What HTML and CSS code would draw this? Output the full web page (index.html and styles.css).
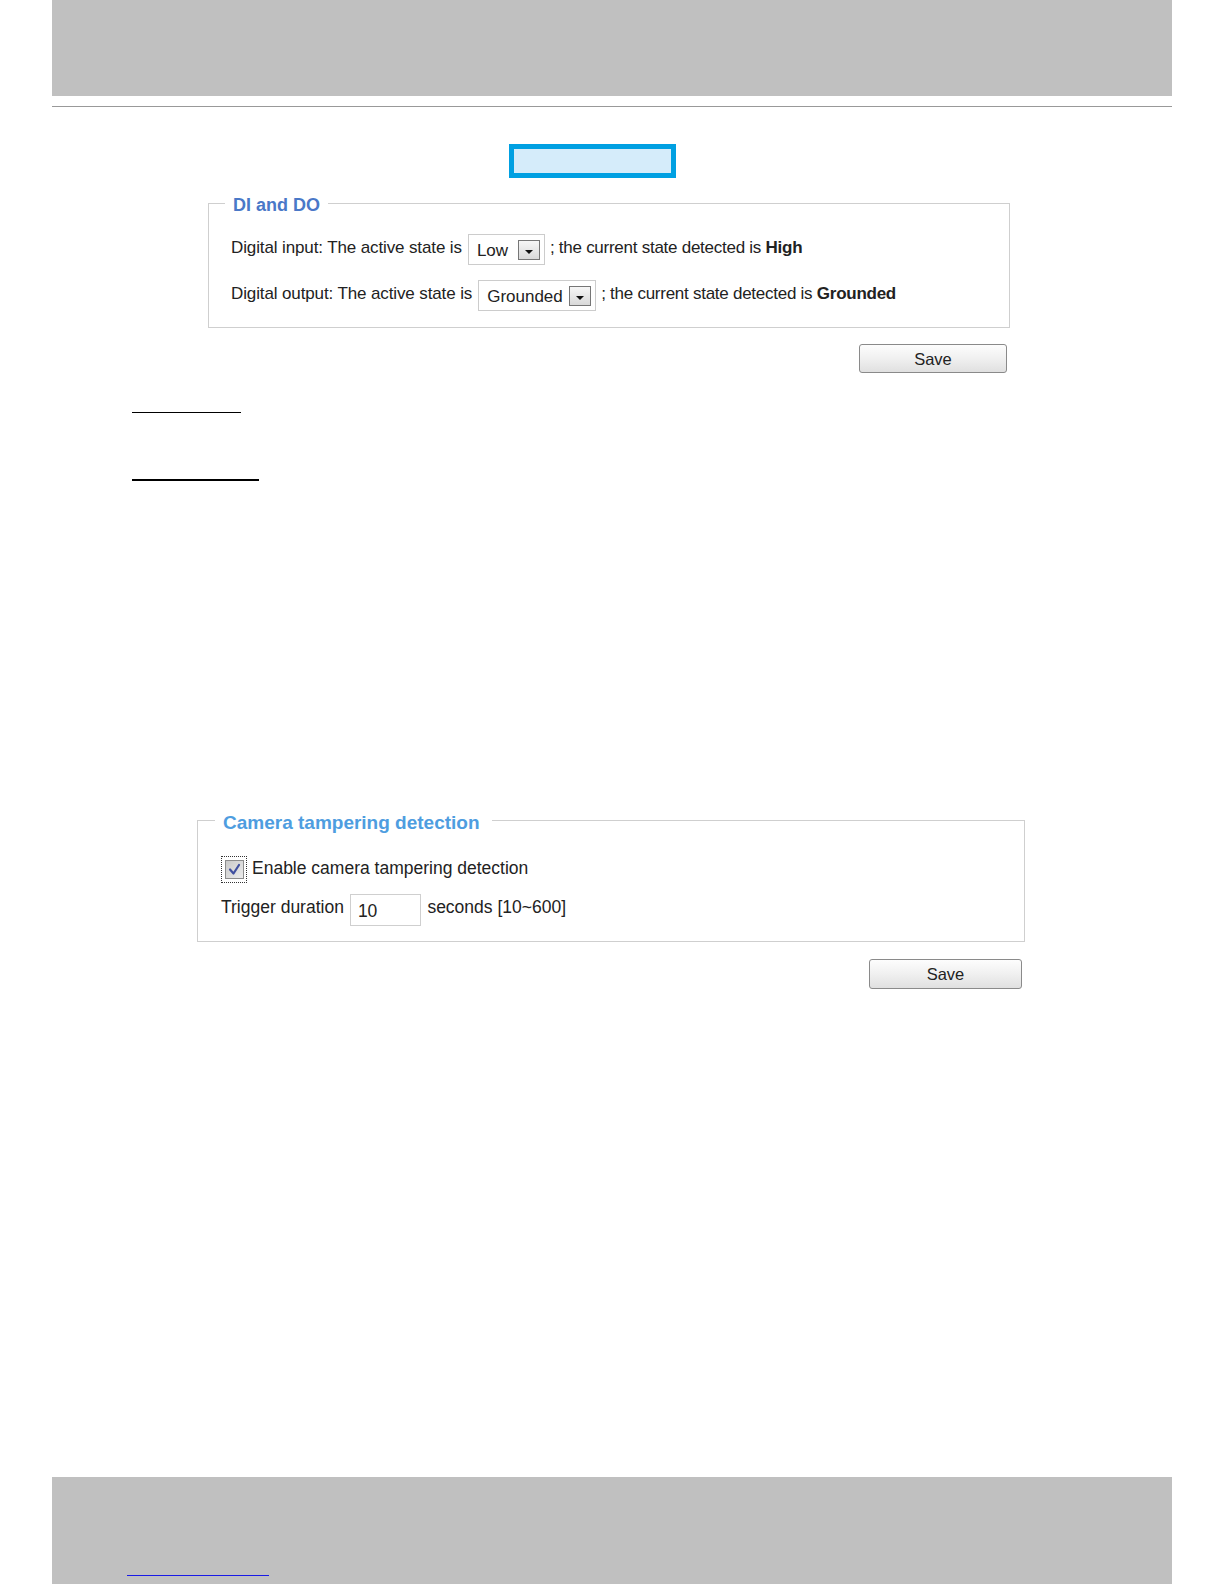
FILE: index.html
```html
<!DOCTYPE html>
<html lang="en">
<head>
<meta charset="utf-8">
<title>DI and DO / Camera tampering detection</title>
<link rel="stylesheet" href="styles.css">
</head>
<body>
<div class="page">
  <header class="top-band"></header>
  <div class="top-rule"></div>
  <div class="callout"></div>

  <fieldset class="panel panel-dio">
    <legend class="panel-title title-dio">DI and DO</legend>
    <div class="panel-body body-dio">
      <div class="row">
        <span class="lbl">Digital input: The active state is</span>
        <span class="select select-low"><span class="select-value">Low</span><span class="select-btn"><span class="caret"></span></span></span>
        <span class="lbl lbl-tail">; the current state detected is <b>High</b></span>
      </div>
      <div class="row">
        <span class="lbl">Digital output: The active state is</span>
        <span class="select select-grounded"><span class="select-value">Grounded</span><span class="select-btn"><span class="caret"></span></span></span>
        <span class="lbl lbl-tail">; the current state detected is <b>Grounded</b></span>
      </div>
    </div>
  </fieldset>
  <div class="actions actions-dio"><button class="btn-save btn-save-dio" type="button">Save</button></div>

  <div class="rule-mark rule-mark-1"></div>
  <div class="rule-mark rule-mark-2"></div>

  <fieldset class="panel panel-tamper">
    <legend class="panel-title title-tamper">Camera tampering detection</legend>
    <div class="panel-body body-tamper">
      <div class="row row-check">
        <span class="focus-ring">
          <span class="checkbox">
            <svg viewBox="0 0 17 17" width="17" height="17" aria-hidden="true"><path d="M4 8.5 L7.5 12.5 L13 4" fill="none" stroke="#4050a0" stroke-width="2.2" stroke-linecap="round" stroke-linejoin="round"/></svg>
          </span>
        </span>
        <span class="check-label">Enable camera tampering detection</span>
      </div>
      <div class="row row-trigger">
        <span class="lbl-t">Trigger duration</span>
        <input class="num-input" type="text" value="10">
        <span class="lbl-t">seconds [10~600]</span>
      </div>
    </div>
  </fieldset>
  <div class="actions actions-tamper"><button class="btn-save btn-save-tamper" type="button">Save</button></div>

  <footer class="bottom-band"><span class="footer-link"></span></footer>
</div>
</body>
</html>
```

FILE: styles.css
```css
* { box-sizing: border-box; }

html, body {
  margin: 0;
  padding: 0;
  background: #ffffff;
}

body {
  font-family: "Liberation Sans", Arial, sans-serif;
  color: #222222;
}

.page {
  width: 1224px;
  height: 1584px;
  display: flex;
  flex-direction: column;
  overflow: hidden;
}

.top-band {
  flex: none;
  height: 96px;
  margin: 0 52px;
  background: #c0c0c0;
}

.top-rule {
  flex: none;
  height: 1px;
  margin: 10px 52px 0;
  background: #999999;
}

.callout {
  flex: none;
  width: 167px;
  height: 34px;
  margin: 37px 0 0 509px;
  border: 5px solid #00a0e2;
  background: #d5ecfa;
}

/* panels */
.panel {
  flex: none;
  min-width: 0;
  padding: 0;
  border: 1px solid #cfcfcf;
}

.panel-title {
  padding: 0 8px;
  font-weight: bold;
}

.panel-dio {
  width: 802px;
  margin: 13px 0 0 208px;
}

.title-dio {
  margin-left: 16px;
  padding-top: 4px;
  font-size: 18px;
  line-height: 20px;
  color: #4a78c8;
}

.body-dio {
  display: flex;
  flex-direction: column;
  gap: 15px;
  padding: 19px 0 16px 22px;
  font-size: 17px;
  letter-spacing: -0.12px;
}

.row {
  display: flex;
  align-items: flex-start;
}

.body-dio .row {
  height: 31px;
  gap: 6px;
}

.lbl {
  margin-top: 4px;
  line-height: 20px;
  white-space: nowrap;
}

.lbl-tail {
  margin-left: -1px;
  letter-spacing: -0.26px;
}

.select {
  display: flex;
  justify-content: space-between;
  align-items: flex-start;
  height: 31px;
  padding: 0 4px 0 8px;
  border: 1px solid #cccccc;
  background: #ffffff;
  letter-spacing: 0;
}

.select-low { width: 77px; }
.select-grounded { width: 118px; }

.select-value {
  margin-top: 6px;
  line-height: 20px;
}

.select-btn {
  display: flex;
  align-items: center;
  justify-content: center;
  width: 22px;
  height: 20px;
  margin-top: 5px;
  border: 1px solid #767676;
  background: linear-gradient(#f6f6f6, #d9d9d9);
}

.caret {
  width: 0;
  height: 0;
  margin-top: 3px;
  border-left: 4px solid transparent;
  border-right: 4px solid transparent;
  border-top: 4px solid #111111;
}

/* save buttons */
.actions {
  flex: none;
  display: flex;
  justify-content: flex-end;
  padding-right: 3px;
}

.actions-dio {
  width: 802px;
  margin: 16px 0 0 208px;
}

.actions-tamper {
  width: 828px;
  margin: 17px 0 0 197px;
}

.btn-save {
  padding: 0;
  border: 1px solid #8a8a8a;
  border-radius: 3px;
  background: linear-gradient(#fdfdfd 0%, #f0f0f0 50%, #e0e0e0 100%);
  font-family: "Liberation Sans", Arial, sans-serif;
  font-size: 16.5px;
  color: #222222;
  line-height: 20px;
}

.btn-save-dio { width: 148px; height: 29px; }
.btn-save-tamper { width: 153px; height: 30px; }

/* stray underline marks */
.rule-mark {
  flex: none;
  margin-left: 132px;
  background: #000000;
}

.rule-mark-1 {
  width: 109px;
  height: 1px;
  margin-top: 39px;
}

.rule-mark-2 {
  width: 127px;
  height: 2px;
  margin-top: 66px;
}

/* tampering panel */
.panel-tamper {
  width: 828px;
  margin: 325px 0 0 197px;
}

.title-tamper {
  margin-left: 17px;
  padding-top: 6px;
  padding-right: 12px;
  font-size: 19px;
  line-height: 22px;
  color: #4e9de0;
}

.body-tamper {
  display: flex;
  flex-direction: column;
  gap: 11px;
  padding: 22px 0 15px 23px;
  font-size: 17.5px;
}

.row-check {
  height: 27px;
  gap: 5px;
}

.focus-ring {
  display: flex;
  align-items: center;
  justify-content: center;
  width: 26px;
  height: 27px;
  border: 1px dotted #333333;
}

.checkbox {
  display: flex;
  align-items: center;
  justify-content: center;
  width: 19px;
  height: 19px;
  border: 1px solid #8c8c8c;
  background: linear-gradient(135deg, #c9c9c9, #ececec);
}

.check-label {
  margin-top: 1.5px;
  line-height: 20px;
  white-space: nowrap;
}

.row-trigger {
  height: 32px;
  gap: 6px;
}

.lbl-t {
  margin-top: 3px;
  line-height: 20px;
  white-space: nowrap;
}

.num-input {
  width: 71px;
  height: 32px;
  margin: 0 0 0 0.5px;
  padding: 2px 0 0 6.5px;
  border: 1px solid #cfcfcf;
  outline: none;
  font-family: "Liberation Sans", Arial, sans-serif;
  font-size: 17.5px;
  color: #222222;
  background: #ffffff;
}

/* footer */
.bottom-band {
  flex: none;
  height: 107px;
  margin: 488px 52px 0;
  background: #c0c0c0;
}

.footer-link {
  display: block;
  width: 142px;
  height: 1px;
  margin: 98px 0 0 75px;
  background: #1a1ae6;
}
```
